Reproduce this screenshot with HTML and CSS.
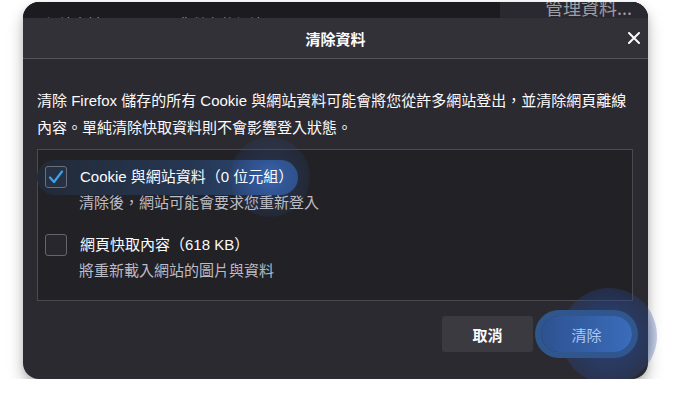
FILE: index.html
```html
<!DOCTYPE html>
<html lang="zh-Hant">
  <head>
    <meta charset="UTF-8" />
    <meta name="viewport" content="width=device-width, initial-scale=1.0" />
    <link rel="stylesheet" href="styles.css">
    <title>清除資料</title>
  </head>
  <body>
    <div class="window">
      <!-- preferences page peeking out behind the dialog -->
      <div class="backdrop">
        <div class="backdrop-left">
          <span>網站資料</span>
          <span>您儲存的網站</span>
        </div>
        <div class="backdrop-right">管理資料...</div>
      </div>

      <div class="dialog">
        <header class="dialog-head">
          <h1>清除資料</h1>
          <button class="close" type="button" aria-label="關閉">
            <svg width="12" height="12" viewBox="0 0 12 12">
              <path d="M1 1 L11 11 M11 1 L1 11" stroke="#fbfbfe" stroke-width="2" stroke-linecap="round" />
            </svg>
          </button>
        </header>

        <div class="dialog-body">
          <p class="intro">清除 Firefox 儲存的所有 Cookie 與網站資料可能會將您從許多網站登出，並清除網頁離線內容。單純清除快取資料則不會影響登入狀態。</p>

          <div class="options">
            <label class="option">
              <span class="focus-ring"></span>
              <span class="box checked">
                <svg width="16" height="14" viewBox="0 0 16 14">
                  <path d="M2 7.5 L6 12 L14 1.5" fill="none" stroke="#3aa3ee" stroke-width="2.2" stroke-linecap="round" stroke-linejoin="round" />
                </svg>
              </span>
              <span class="texts">
                <span class="title">Cookie 與網站資料（0 位元組）</span>
                <span class="desc">清除後，網站可能會要求您重新登入</span>
              </span>
            </label>

            <label class="option">
              <span class="box"></span>
              <span class="texts">
                <span class="title">網頁快取內容（618 KB）</span>
                <span class="desc">將重新載入網站的圖片與資料</span>
              </span>
            </label>
          </div>
        </div>

        <footer class="dialog-foot">
          <button class="btn" type="button">取消</button>
          <button class="btn primary" type="button">清除</button>
        </footer>
      </div>
    </div>
  </body>
</html>
```

FILE: styles.css
```css
:root {
  --page-bg: #ffffff;
  --backdrop: #1c1b20;
  --dialog-bg: #2b2a30;
  --head-bg: #323137;
  --box-bg: #222125;
  --line: #4b4a50;
  --text: #fbfbfe;
  --text-dim: #bcbcc5;
}

* {
  box-sizing: border-box;
}

body {
  margin: 0;
  background: var(--page-bg);
  font-family: "Liberation Sans", "Noto Sans CJK TC", sans-serif;
}

/* window frame */
.window {
  width: 625px;
  height: 377px;
  margin: 2px 0 0 23px;
  border-radius: 16px;
  background: var(--dialog-bg);
  box-shadow: 0 9px 16px rgba(0, 0, 0, 0.25), 0 2px 6px rgba(0, 0, 0, 0.12);
  display: flex;
  flex-direction: column;
}

.backdrop {
  height: 16px;
  display: flex;
  background: var(--backdrop);
  border-radius: 16px 16px 0 0;
  overflow: hidden;
}

.backdrop-left {
  flex: 1;
  display: flex;
  gap: 78px;
  padding: 11px 0 0 22px;
  font-size: 14px;
  color: #9d9ca4;
}

.backdrop-right {
  width: 148px;
  background: #2a2930;
  color: #9e9ea4;
  font-size: 18px;
  line-height: 18px;
  margin-top: -6px;
  padding: 2px 0 0 45px;
  font-family: "Noto Sans CJK TC", sans-serif;
  white-space: nowrap;
}

/* dialog */
.dialog {
  flex: 1;
  display: flex;
  flex-direction: column;
}

.dialog-head {
  position: relative;
  height: 41px;
  background: var(--head-bg);
  border-bottom: 1px solid #55545a;
  display: flex;
  align-items: center;
  justify-content: center;
}

.dialog-head h1 {
  margin: 0;
  font-size: 15px;
  font-weight: bold;
  color: var(--text);
  font-family: "Noto Sans CJK TC", sans-serif;
}

.close {
  position: absolute;
  right: 8px;
  top: 14px;
  width: 12px;
  height: 12px;
  padding: 0;
  border: 0;
  background: none;
  display: flex;
}

.dialog-body {
  padding: 28px 15px 0 14px;
}

.intro {
  margin: 0 0 8px;
  font-size: 15px;
  line-height: 27px;
  color: var(--text);
}

.options {
  height: 152px;
  border: 1px solid var(--line);
  background: var(--box-bg);
  padding: 16px 8px 18px 7px;
  display: flex;
  flex-direction: column;
  gap: 20px;
}

.option {
  position: relative;
  display: grid;
  grid-template-columns: 22px 1fr;
  column-gap: 13px;
  align-items: start;
}

/* click / focus highlight on the first row */
.focus-ring {
  position: absolute;
  left: -8px;
  top: -6px;
  width: 261px;
  height: 35px;
  border-radius: 18px;
  background:
    radial-gradient(circle at 233px 17px, rgba(62, 110, 185, 0.9) 0, rgba(52, 92, 160, 0.7) 16px, rgba(40, 68, 112, 0) 40px),
    linear-gradient(90deg, #222a36, #263753 60%, #2c4c80);
}

.focus-ring::after {
  content: "";
  position: absolute;
  left: 193px;
  top: -23px;
  width: 80px;
  height: 80px;
  border-radius: 50%;
  background: radial-gradient(circle, rgba(50, 90, 160, 0.35) 0, rgba(45, 80, 145, 0.2) 60%, rgba(40, 70, 130, 0) 100%);
}

.box {
  position: relative;
  width: 22px;
  height: 22px;
  border: 1px solid #66656e;
  border-radius: 3px;
  background: #28272d;
  display: flex;
  align-items: center;
  justify-content: center;
}

.box.checked {
  background: #263143;
  border-color: #6b6f7c;
}

.texts {
  position: relative;
  display: flex;
  flex-direction: column;
  gap: 4px;
}

.title {
  font-size: 15px;
  line-height: 22px;
  color: var(--text);
}

.desc {
  font-size: 15px;
  line-height: 22px;
  color: var(--text-dim);
  margin-left: -1px;
}

/* footer buttons */
.dialog-foot {
  position: relative;
  z-index: 0;
  display: flex;
  justify-content: flex-end;
  gap: 8px;
  padding: 15px 16px 0 0;
}

.btn {
  position: relative;
  width: 91px;
  height: 36px;
  border: 0;
  border-radius: 3px;
  background: #3b3a40;
  color: var(--text);
  font-size: 15px;
  font-weight: bold;
  font-family: "Noto Sans CJK TC", sans-serif;
}

.btn.primary {
  border-radius: 18px;
  background: linear-gradient(90deg, #2e5290, #3a6cbb);
  color: #a9c8f2;
  font-weight: normal;
  box-shadow: 0 0 0 6px #30568e;
}

/* tap glow round the primary button */
.btn.primary::before {
  content: "";
  position: absolute;
  left: 20px;
  top: -28px;
  width: 96px;
  height: 96px;
  border-radius: 50%;
  z-index: -1;
  background: radial-gradient(circle, rgba(40, 75, 150, 0.75) 0, rgba(40, 70, 140, 0.45) 55%, rgba(60, 100, 190, 0.12) 85%, rgba(60, 100, 190, 0) 100%);
}
```
